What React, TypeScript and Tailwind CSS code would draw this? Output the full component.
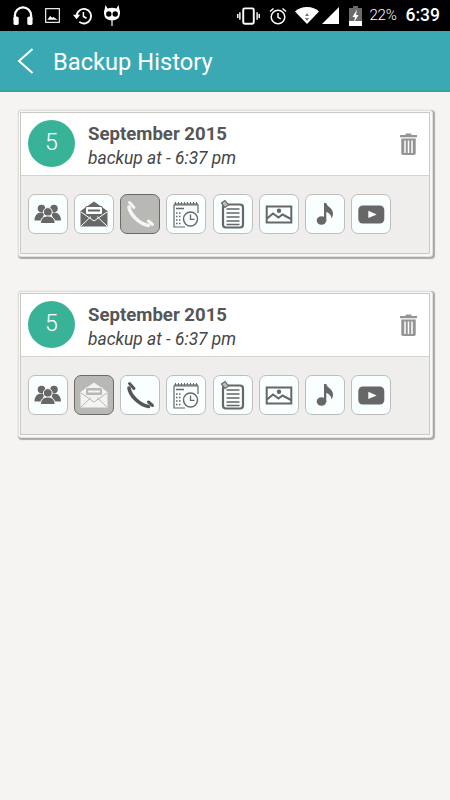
const slate = "#666766";
const box = "1 1 38 38";

function PeopleIcon({ color }: { color: string }) {
  return (
    <svg viewBox={box} className="h-full w-full" fill={color}>
      <circle cx="13.500" cy="14.500" r="3.800" />
      <circle cx="26" cy="14.500" r="3.800" />
      <path d="M6.500 26.500c0-4.500 2.500-8 7-8 1.500 0 2.500.5 3.500 1-1.500 1.500-2.500 3.500-2.500 7zM33 26.500c0-4.500-2.500-8-7-8-1.500 0-2.500.5-3.500 1 1.500 1.500 2.500 3.500 2.500 7z" />
      <circle cx="19.800" cy="18" r="4.400" stroke="#f9fffe" strokeWidth="1" />
      <path d="M12.500 29.500c0-5 2.800-7.500 7.300-7.500s7.300 2.500 7.300 7.500z" stroke="#f9fffe" strokeWidth="1" />
    </svg>
  );
}

function MailIcon({ color, paper }: { color: string; paper: string }) {
  return (
    <svg viewBox={box} className="h-full w-full">
      <path d="M6.500 17L20 7.500 33.500 17v15.500h-27z" fill={color} />
      <rect x="11.500" y="12.500" width="17" height="8" rx="1.500" fill={paper} stroke={color} strokeWidth="1" />
      <path d="M14 16.500h12" stroke={color} strokeWidth="2" />
      <path d="M7 32l10-9.500M33 32L23 22.500M7 18l13 9 13-9" stroke={paper} strokeWidth="1" fill="none" />
    </svg>
  );
}

function PhoneIcon({ color }: { color: string }) {
  return (
    <svg viewBox={box} className="h-full w-full" fill="none" stroke={color} strokeLinecap="round">
      <path d="M9 13c.8 7 10 17 19.500 18.500" strokeWidth="3.600" />
      <path d="M9.500 8.500l4.500 5M28.500 27l4 3.500" strokeWidth="3" />
    </svg>
  );
}

function CalendarIcon() {
  return (
    <svg viewBox={box} className="h-full w-full" fill="none" stroke={slate}>
      <path d="M32 19V11H8v22h11" strokeWidth="1.200" />
      <path d="M8 10h24" strokeWidth="1.200" />
      <path d="M9.500 8v2.500M12.500 8v2.500M15.500 8v2.500M18.500 8v2.500M21.500 8v2.500M24.500 8v2.500M27.500 8v2.500M30.500 8v2.500" strokeWidth="1" />
      <path d="M10 14.500h8" strokeWidth="1.500" />
      <path d="M10 19h1.500M13 19h1.500M10 22.500h1.500M13 22.500h1.500M10 26h1.500M13 26h1.500M10 29.500h1.500M13 29.500h1.500" strokeWidth="1.500" />
      <circle cx="24.500" cy="25" r="7" fill="#f9fffe" strokeWidth="1.400" />
      <path d="M24.500 20.500v4.800h4" strokeWidth="1.300" />
    </svg>
  );
}

function NoteIcon() {
  return (
    <svg viewBox={box} className="h-full w-full" fill="none" stroke={slate}>
      <rect x="10" y="10.500" width="20" height="23" rx="3" strokeWidth="2.200" />
      <path d="M13.500 15h13M13.500 19h13M13.500 23h13M13.500 27h13M13.500 30.500h13" strokeWidth="1.400" />
      <path d="M8.500 9l3.500-2.500 3.500 4.500-3.500 2.500z" fill="#bdbdbb" strokeWidth="1.200" />
    </svg>
  );
}

function ImageIcon() {
  return (
    <svg viewBox={box} className="h-full w-full">
      <rect x="7.700" y="12.500" width="24.600" height="16" fill="none" stroke={slate} strokeWidth="2" />
      <circle cx="20" cy="16.800" r="2.200" fill={slate} />
      <path d="M8 24.500l6-5 5.500 4 4-3 8.500 4.500" fill="none" stroke={slate} strokeWidth="2" />
    </svg>
  );
}

function MusicIcon() {
  return (
    <svg viewBox={box} className="h-full w-full" fill={slate}>
      <ellipse cx="16.500" cy="26.500" rx="4.800" ry="4.200" />
      <path d="M19 9h2.300c.5 4 6.700 4.500 6.700 10.500 0 2-.6 3.500-1.500 5 .1-3.500-3-6-5.200-6.500v9H19z" />
    </svg>
  );
}

function VideoIcon() {
  return (
    <svg viewBox={box} className="h-full w-full">
      <rect x="7.300" y="11.500" width="26" height="18" rx="4.500" fill={slate} />
      <path d="M17.300 16.700l8.400 3.700-8.400 3.600z" fill="#f9fffe" />
    </svg>
  );
}

function IconButton({ active, children }: { active?: boolean; children: React.ReactNode }) {
  return (
    <div
      className={`h-10 w-10 shrink-0 rounded-[7px] border ${
        active ? "border-[#6a6b69] bg-[#b8b9b5]" : "border-[#bdbdb9] bg-[#f9fffe]"
      }`}
    >
      {children}
    </div>
  );
}

function BackupCard({ activeIndex }: { activeIndex: number }) {
  return (
    <div className="rounded-[3px] border border-[#e0dfdc] bg-[#f8f8f6] p-px pr-[2px] pb-[2px] shadow-[1px_1px_1px_1px_#a9a9a6]">
      <div className="h-[142px] overflow-hidden border border-[#c9c9c5] bg-[#efeeec]">
        <div className="flex h-[63px] items-center border-b border-[#d3d3d0] bg-white pr-[12px] pl-[7px]">
          <div className="mb-px flex h-[47px] w-[47px] shrink-0 items-center justify-center rounded-full bg-[#38b398] text-[23px] font-light text-white">
            5
          </div>
          <div className="ml-[13px] min-w-0 flex-1 pt-[3px] text-[#555655]">
            <div className="text-[18.600px] leading-[24px] font-bold">September 2015</div>
            <div className="text-[17.400px] leading-[24px] text-[#444544] italic">backup at - 6:37 pm</div>
          </div>
          <svg viewBox="0 0 20 26" className="h-[24px] w-[17px] shrink-0" fill="#949494">
            <path d="M7 0.500h6l.7 2H20v2.500H0V2.500h6.300z" />
            <path d="M1.500 6.500h17v17.500a2 2 0 0 1-2 2h-13a2 2 0 0 1-2-2zM5 9v14.500h1.800V9zM9.100 9v14.500h1.800V9zM13.200 9v14.500H15V9z" fillRule="evenodd" />
          </svg>
        </div>
        <div className="flex gap-[6.150px] pt-[18px] pl-[7px]">
          <IconButton>
            <PeopleIcon color={slate} />
          </IconButton>
          <IconButton active={activeIndex === 1}>
            {activeIndex === 1 ? <MailIcon color="#f3f3f1" paper="#b8b9b5" /> : <MailIcon color={slate} paper="#f9fffe" />}
          </IconButton>
          <IconButton active={activeIndex === 2}>
            <PhoneIcon color={activeIndex === 2 ? "#f5f5f3" : "#555655"} />
          </IconButton>
          <IconButton>
            <CalendarIcon />
          </IconButton>
          <IconButton>
            <NoteIcon />
          </IconButton>
          <IconButton>
            <ImageIcon />
          </IconButton>
          <IconButton>
            <MusicIcon />
          </IconButton>
          <IconButton>
            <VideoIcon />
          </IconButton>
        </div>
      </div>
    </div>
  );
}

function StatusBar() {
  return (
    <div className="flex h-[31px] items-center bg-black pr-[10px] pl-[12px] text-white">
      <svg viewBox="0 0 22 22" className="h-[21px] w-[22px]" fill="none">
        <path d="M2.500 15V11a8.500 8.500 0 0 1 17 0v4" stroke="white" strokeWidth="2.400" />
        <rect x="1" y="12" width="5.500" height="9" rx="2" fill="white" />
        <rect x="15.500" y="12" width="5.500" height="9" rx="2" fill="white" />
      </svg>
      <svg viewBox="0 0 16 16" className="ml-[11px] h-[15px] w-[15px]" fill="none">
        <rect x="0.700" y="0.700" width="14.600" height="14.600" stroke="white" strokeWidth="1.200" />
        <path d="M2.500 12.500l3-4 2 2 1.500-1 4.500 3z" fill="white" />
      </svg>
      <svg viewBox="0 0 22 22" className="ml-[12px] h-[20px] w-[21px]" fill="none" stroke="white" strokeWidth="2">
        <path d="M4.500 11a8 8 0 1 1 3 6.500" />
        <path d="M0.500 9.500h8l-4 5z" fill="white" stroke="none" />
        <path d="M12 6.500v5l3.500 2" strokeWidth="1.700" />
      </svg>
      <svg viewBox="0 0 16 21" className="ml-[11px] h-[21px] w-[16px]">
        <path d="M1.500 0l2 3.500c3-1 6-1 9 0l2-3.500 1 5c1 2 .5 6-1 8-1.500 1.500-4 2.500-6.500 2.500S3 14.500 1.500 13C0 11-.5 7 .5 5z" fill="white" />
        <circle cx="4.800" cy="9" r="2.700" fill="black" />
        <circle cx="11.200" cy="9" r="2.700" fill="black" />
        <rect x="7.400" y="15" width="1.200" height="6" fill="white" />
      </svg>
      <div className="ml-auto flex items-center">
        <svg viewBox="0 0 24 18" className="h-[18px] w-[23px]" fill="none" stroke="white">
          <rect x="6.500" y="1" width="11" height="16" rx="1.500" strokeWidth="2" />
          <path d="M3 5v8M0.800 7v4M21 5v8M23.200 7v4" strokeWidth="1.500" />
        </svg>
        <svg viewBox="0 0 18 18" className="ml-[9px] h-[18px] w-[18px]" fill="none" stroke="white" strokeWidth="1.500">
          <circle cx="9" cy="10" r="6.800" />
          <path d="M9 6v4.300l2.800 1.500M1 4.500L4.500 1.500M17 4.500L13.500 1.500" />
        </svg>
        <svg viewBox="0 0 24 17" className="ml-[8px] h-[17px] w-[24px]">
          <path d="M0 4.500C3 1.500 7 0 12 0s9 1.500 12 4.500L12 17z" fill="white" />
          <path d="M12 6l2 3h-4zM12 14l-2-3h4z" fill="#777" />
        </svg>
        <svg viewBox="0 0 17 17" className="ml-[3px] h-[17px] w-[17px]">
          <path d="M17 0v17H0z" fill="white" />
        </svg>
        <svg viewBox="0 0 13 20" className="ml-[10px] h-[20px] w-[13px]">
          <path d="M4 0h5v2h4v18H0V2h4z" fill="#6b6b6b" />
          <rect y="15" width="13" height="5" fill="white" />
          <path d="M8 3.500L3.500 11H6l-1 5.500L9.500 9H7z" fill="white" />
        </svg>
        <span className="ml-[7px] font-['Roboto',sans-serif] text-[15px] font-light tracking-[-0.2px]">22%</span>
        <span className="ml-[9px] font-['Roboto',sans-serif] text-[17.500px] font-medium">6:39</span>
      </div>
    </div>
  );
}

export default function App() {
  return (
    <div className="min-h-[800px] bg-[#f5f4f2] font-['Roboto',sans-serif]">
      <StatusBar />
      <div className="flex h-[61px] items-center border-b-2 border-[#35a39e] bg-[#3aa9b3] pl-[17px] text-white">
        <svg viewBox="0 0 17 26" className="h-[26px] w-[17px]" fill="none" stroke="white" strokeWidth="2">
          <path d="M15.500 1L2 13l13.500 12" />
        </svg>
        <span className="mt-[5px] ml-[19px] text-[23.700px]">Backup History</span>
      </div>
      <div className="flex flex-col gap-[34px] pt-[18px] pr-[17px] pl-[18px]">
        <BackupCard activeIndex={2} />
        <BackupCard activeIndex={1} />
      </div>
    </div>
  );
}
